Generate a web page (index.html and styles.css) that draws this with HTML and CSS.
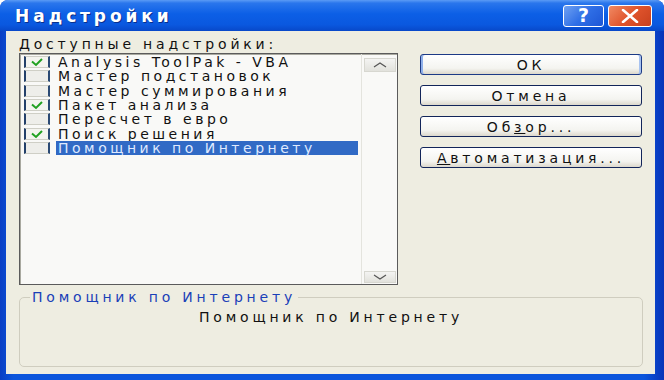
FILE: index.html
```html
<!DOCTYPE html>
<html lang="ru">
<head>
    <meta charset="UTF-8">
    <title>Надстройки</title>
    <link rel="stylesheet" href="styles.css">
</head>
<body>
    <div class="window">
        <div class="titlebar">
            <span class="title">Надстройки</span>
            <div class="caption-buttons">
                <span class="cap help">?</span>
                <span class="cap close">
                    <svg width="20" height="14" viewBox="0 0 20 14"><path d="M3 1 L17 13 M17 1 L3 13" stroke="#fff" stroke-width="2.6" stroke-linecap="round"/></svg>
                </span>
            </div>
        </div>

        <div class="client">
            <div class="main">
                <div class="addins">
                    <div class="caption">Доступные надстройки:</div>
                    <div class="listbox">
                        <ul class="items">
                            <li><span class="check on"></span><span class="name">Analysis ToolPak - VBA</span></li>
                            <li><span class="check"></span><span class="name">Мастер подстановок</span></li>
                            <li><span class="check"></span><span class="name">Мастер суммирования</span></li>
                            <li><span class="check on"></span><span class="name">Пакет анализа</span></li>
                            <li><span class="check"></span><span class="name">Пересчет в евро</span></li>
                            <li><span class="check on"></span><span class="name">Поиск решения</span></li>
                            <li class="selected"><span class="check"></span><span class="name">Помощник по Интернету</span></li>
                        </ul>
                        <div class="scrollbar">
                            <span class="arrow">
                                <svg width="16" height="8" viewBox="0 0 16 8"><path d="M2 6 L8 2 L14 6" fill="none" stroke="#555" stroke-width="1.2"/></svg>
                            </span>
                            <span class="arrow down">
                                <svg width="16" height="8" viewBox="0 0 16 8"><path d="M2 2 L8 6 L14 2" fill="none" stroke="#555" stroke-width="1.2"/></svg>
                            </span>
                        </div>
                    </div>
                </div>

                <div class="actions">
                    <button class="btn default">ОК</button>
                    <button class="btn">Отмена</button>
                    <button class="btn">Об<u>з</u>ор...</button>
                    <button class="btn"><u>А</u>втоматизация...</button>
                </div>
            </div>

            <fieldset class="details">
                <legend>Помощник по Интернету</legend>
                <p>Помощник по Интернету</p>
            </fieldset>
        </div>
    </div>
</body>
</html>
```

FILE: styles.css
```css
* {
    box-sizing: border-box;
}
body {
    margin: 0;
    background-color: #fff;
    font-family: "DejaVu Sans", "Noto Sans", sans-serif;
}
.window {
    width: 664px;
    height: 380px;
    display: flex;
    flex-direction: column;
    background: linear-gradient(90deg, #0a3fc4 0%, #0b55dc 2%, #0b55dc 97%, #0733b8 100%);
    border-radius: 8px 8px 0 0;
    overflow: hidden;
}

/* title bar */
.titlebar {
    height: 31px;
    display: flex;
    align-items: center;
    justify-content: space-between;
    padding: 0 12px 0 15px;
    background: linear-gradient(#5b9bf5 0%, #2a76ec 10%, #0c5fe6 45%, #0a58df 80%, #0848c9 100%);
}
.title {
    color: #fff;
    font-weight: bold;
    font-size: 17px;
    letter-spacing: 3.9px;
    text-shadow: 1px 1px 0 #0a2f8c;
}
.caption-buttons {
    display: flex;
    gap: 4px;
}
.cap {
    width: 41px;
    height: 22px;
    border: 1px solid #fff;
    border-radius: 3px;
    display: flex;
    align-items: center;
    justify-content: center;
}
.help {
    background: linear-gradient(135deg, #6fa1f2, #2f6fe6 50%, #1d56d6);
    color: #fff;
    font-weight: bold;
    font-size: 19px;
    line-height: 1;
}
.close {
    width: 44px;
    background: linear-gradient(135deg, #f08a64, #e0542c 50%, #c8401e);
}

/* client area */
.client {
    flex: 1;
    margin: 0 9px 6px 6px;
    background-color: #eeede1;
    display: flex;
    flex-direction: column;
}
.main {
    display: flex;
    padding: 0 12px 0 13px;
}
.addins {
    width: 379px;
}
.caption {
    height: 22px;
    padding-top: 6px;
    font-size: 14px;
    line-height: 14px;
    letter-spacing: 3.8px;
    color: #111;
}
.listbox {
    height: 232px;
    display: flex;
    background-color: #f9f9f7;
    border: 1px solid #5b5b5b;
    box-shadow: inset 1px 1px 0 #a9a9a0;
}
.items {
    flex: 1;
    list-style: none;
    margin: 0;
    padding: 1px 3px 0 4px;
}
.items li {
    height: 14.3px;
    display: flex;
    align-items: center;
    font-size: 14px;
    letter-spacing: 3.5px;
    color: #111;
}
.check {
    width: 26px;
    height: 12px;
    flex: none;
    margin-right: 6px;
    background-color: #eeeeea;
    border: 1px solid #cfcfc6;
    border-left: 2px solid #23406a;
    border-right: 2px solid #2b4a74;
}
.check.on {
    background: #f4f4ef url("data:image/svg+xml,%3Csvg xmlns='http://www.w3.org/2000/svg' width='22' height='10'%3E%3Cpath d='M6 4.5 L10 8 L16 2' fill='none' stroke='%2321a121' stroke-width='2'/%3E%3C/svg%3E") center no-repeat;
}
.name {
    flex: 1;
    height: 14px;
    line-height: 14px;
    padding-left: 2px;
    white-space: nowrap;
}
.selected .name {
    background-color: #316ac5;
    color: #dfe9ff;
}
.scrollbar {
    width: 36px;
    display: flex;
    flex-direction: column;
    justify-content: space-between;
    padding: 4px 1px 1px 2px;
    border-left: 1px solid #e4e4de;
}
.arrow {
    height: 14px;
    display: flex;
    align-items: center;
    justify-content: center;
    background: linear-gradient(#f4f4f2, #e2e2dc);
    border: 1px solid #d7d7d0;
}
.arrow.down {
    height: 12px;
}

/* buttons */
.actions {
    display: flex;
    flex-direction: column;
    gap: 10px;
    width: 222px;
    margin-left: 22px;
    padding-top: 23px;
}
.btn {
    height: 21px;
    padding: 0;
    border: 1px solid #12255a;
    border-radius: 3px;
    background: linear-gradient(#ffffff, #f4f4f0 70%, #dcd8cc);
    font-family: "DejaVu Sans", sans-serif;
    font-size: 14px;
    letter-spacing: 3.8px;
    color: #111;
}
.btn.default {
    border-color: #1c3a86;
    box-shadow: inset 2px 0 0 #8fb0ea, inset -2px 0 0 #a8c3f0;
}

/* description box */
.details {
    flex: 1;
    margin: 4px 12px 7px 13px;
    padding: 0 10px;
    border: 1px solid #cfcdbf;
    border-radius: 5px;
}
.details legend {
    padding: 0 2px;
    font-size: 14px;
    letter-spacing: 3.8px;
    color: #1a40b8;
}
.details p {
    margin: 4px 0 0;
    text-align: center;
    font-size: 14px;
    letter-spacing: 3.8px;
    color: #111;
}
```
